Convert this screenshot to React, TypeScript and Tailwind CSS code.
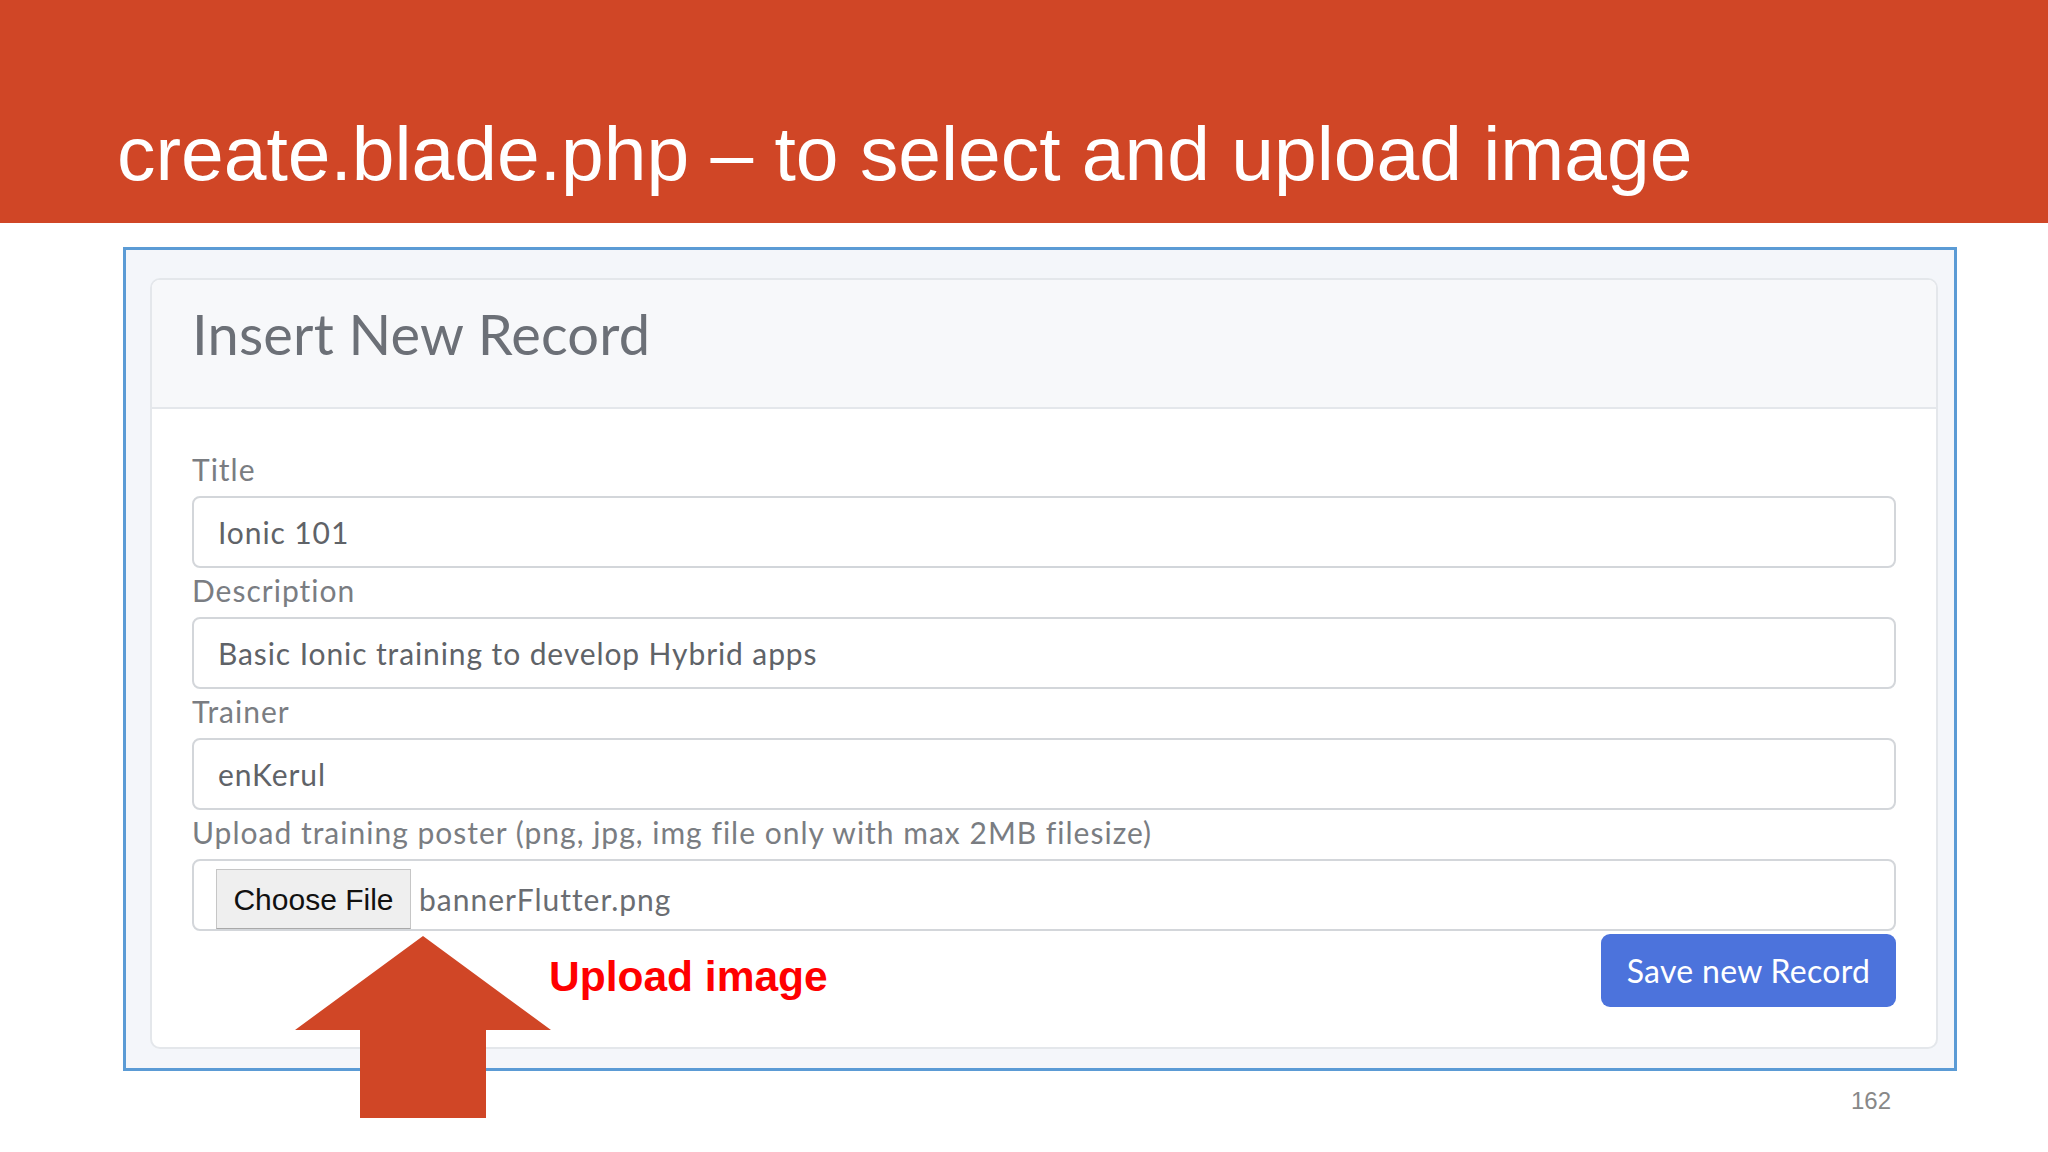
import React from "react";

const fields = [
  { label: "Title", value: "Ionic 101" },
  { label: "Description", value: "Basic Ionic training to develop Hybrid apps" },
  { label: "Trainer", value: "enKerul" },
];

const UpArrow = () => (
  <svg
    className="absolute left-[295px] top-[936px]"
    width="256"
    height="182"
    viewBox="0 0 256 182"
  >
    <polygon
      points="128,0 256,94 191,94 191,182 65,182 65,94 0,94"
      fill="#d04626"
    />
  </svg>
);

const App = () => {
  return (
    <div className="relative w-[2048px] h-[1152px] bg-white overflow-hidden">
      <div className="h-[223px] bg-[#d04626] pl-[117px] pt-[115px]">
        <h1 className="text-[76.8px] leading-[77px] text-white font-['Liberation_Sans',Arial,sans-serif]">
          create.blade.php – to select and upload image
        </h1>
      </div>

      <div className="ml-[123px] mt-[24px] w-[1834px] h-[824px] border-[3px] border-[#5b9bd5] bg-[#f4f6fa] pl-[24px] pr-[16px] pt-[28px] pb-[19px]">
        <div className="h-full rounded-[10px] border-2 border-[#e4e7eb] bg-white overflow-hidden font-['Lato',sans-serif] flex flex-col">
          <div className="h-[129px] shrink-0 bg-[#f7f8fa] border-b-2 border-[#e4e7eb] flex items-center px-[40px]">
            <h2 className="text-[56px] tracking-[0.2px] text-[#6c7077] pb-[20px]">
              Insert New Record
            </h2>
          </div>

          <div className="px-[40px] pt-[42px] flex flex-col">
            {fields.map((f) => (
              <div key={f.label} className="flex flex-col mb-[4px]">
                <label className="text-[30px] leading-[36px] tracking-[1px] text-[#7a7d82] mb-[9px]">
                  {f.label}
                </label>
                <div className="h-[72px] rounded-[8px] border-2 border-[#d3d6da] flex items-center pl-[24px] text-[30px] tracking-[0.9px] text-[#5f6368]">
                  {f.value}
                </div>
              </div>
            ))}

            <div className="flex flex-col">
              <label className="text-[30px] leading-[36px] tracking-[1px] text-[#7a7d82] mb-[9px]">
                Upload training poster (png, jpg, img file only with max 2MB filesize)
              </label>
              <div className="h-[72px] rounded-[8px] border-2 border-[#d3d6da] flex items-end pl-[22px]">
                <div className="h-[60px] w-[195px] bg-[#efefef] border border-[#c6c6c6] border-b-[#a9a9a9] flex items-center justify-center text-[30px] text-[#111] font-['Liberation_Sans',Arial,sans-serif]">
                  Choose File
                </div>
                <span className="h-[60px] flex items-center ml-[8px] text-[30px] tracking-[1px] text-[#6a6d72]">
                  bannerFlutter.png
                </span>
              </div>
            </div>

            <div className="flex justify-end mt-[3px]">
              <button className="h-[73px] w-[295px] rounded-[9px] bg-[#4c73dc] text-white text-[32px] tracking-[0.3px] flex items-center justify-center">
                Save new Record
              </button>
            </div>
          </div>
        </div>
      </div>

      <div className="flex justify-end pr-[157px] mt-[18px]">
        <span className="text-[24px] leading-[24px] text-[#888] font-['Liberation_Sans',Arial,sans-serif]">
          162
        </span>
      </div>

      <UpArrow />
      <span className="absolute left-[549px] top-[956px] text-[42.5px] leading-[42px] font-bold text-[#ff0000] font-['Liberation_Sans',Arial,sans-serif]">
        Upload image
      </span>
    </div>
  );
};

export default App;
